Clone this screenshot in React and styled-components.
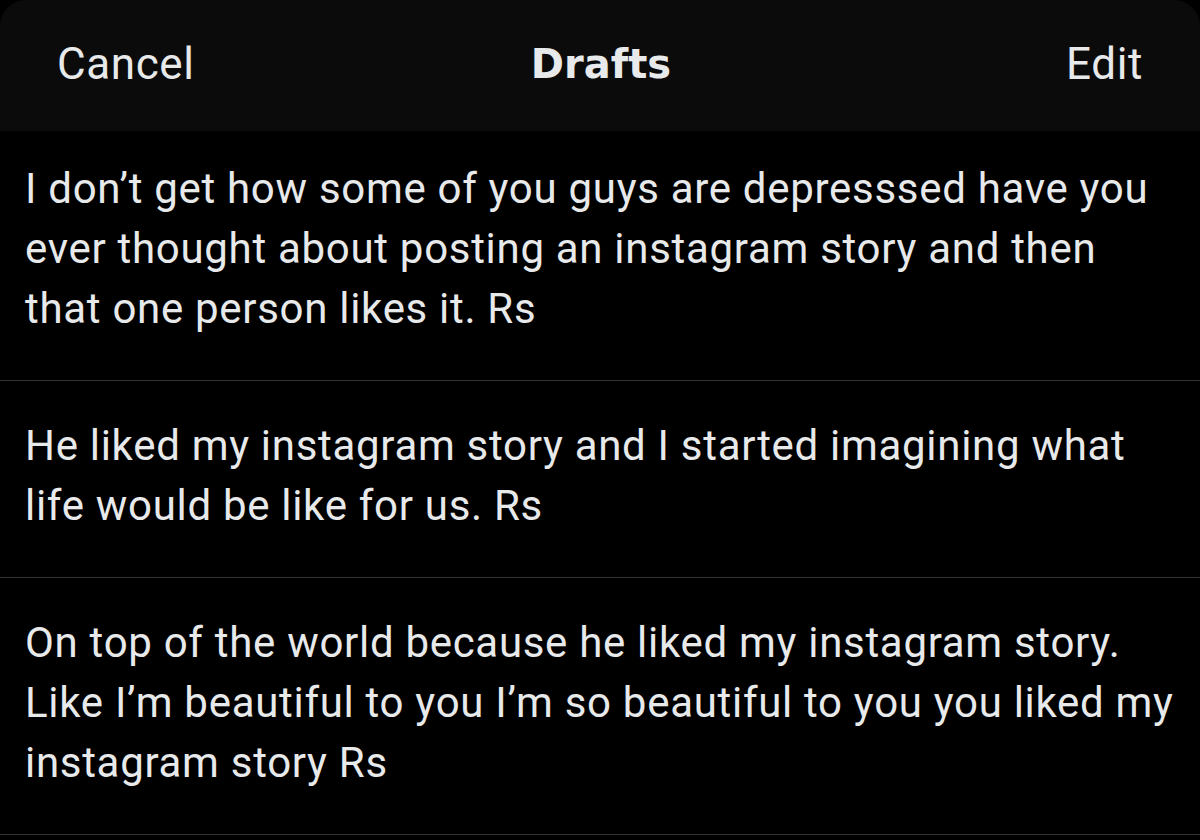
import React from 'react';
import styled, { createGlobalStyle } from 'styled-components';

const GlobalStyle = createGlobalStyle`
    html, body {
        margin: 0;
        padding: 0;
        background: #1c1c1c;
    }
    body {
        font-family: Roboto, "Liberation Sans", sans-serif;
        -webkit-font-smoothing: antialiased;
    }
`

const drafts = [
    [
        "I don’t get how some of you guys are depresssed have you",
        "ever thought about posting an instagram story and then",
        "that one person likes it. Rs",
    ],
    [
        "He liked my instagram story and I started imagining what",
        "life would be like for us. Rs",
    ],
    [
        "On top of the world because he liked my instagram story.",
        "Like I’m beautiful to you I’m so beautiful to you you liked my",
        "instagram story Rs",
    ],
]

const App = () => {
    return (
        <Screen>
            <GlobalStyle />
            <Header>
                <HeaderButton>Cancel</HeaderButton>
                <Title>Drafts</Title>
                <HeaderButton align="right">Edit</HeaderButton>
            </Header>
            <List>
                {drafts.map((lines, i) => (
                    <DraftRow key={i}>
                        {lines.map((line, j) => (
                            <Line key={j}>{line}</Line>
                        ))}
                    </DraftRow>
                ))}
            </List>
        </Screen>
    )
}

const Screen = styled.div`
    width: 1200px;
    height: 840px;
    display: flex;
    flex-direction: column;
    background: #000;
    overflow: hidden;
`
const Header = styled.div`
    height: 131px;
    flex-shrink: 0;
    display: grid;
    grid-template-columns: 1fr auto 1fr;
    align-items: center;
    padding: 0 57px 4px 57px;
    box-sizing: border-box;
    background: #0b0b0b;
    border-radius: 26px 26px 0 0;
`
const HeaderButton = styled.div`
    font-size: 44px;
    letter-spacing: 0.6px;
    color: #e7e9ea;
    text-align: ${p => p.align || 'left'};
`
const Title = styled.div`
    font-family: "DejaVu Sans", Roboto, sans-serif;
    font-size: 40px;
    font-weight: 700;
    color: #e7e9ea;
    padding-left: 2px;
`
const List = styled.div`
    display: flex;
    flex-direction: column;
    flex: 1;
    background: #000;
`
const DraftRow = styled.div`
    padding: 35px 25px 41px 25px;
    border-bottom: 1px solid #2f3336;
    &:first-child {
        padding-top: 28px;
    }
`
const Line = styled.div`
    font-size: 42px;
    line-height: 60px;
    letter-spacing: 0.7px;
    color: #e7e9ea;
    white-space: nowrap;
`

export default App;
